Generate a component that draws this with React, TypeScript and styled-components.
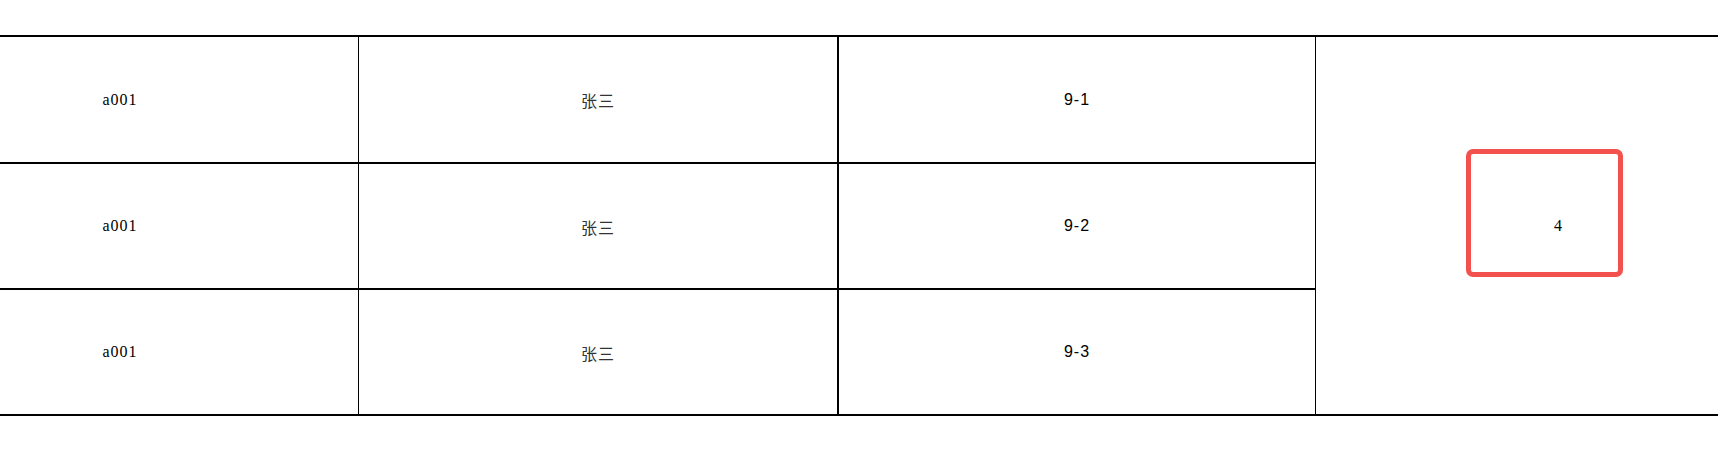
import React from "react";
import styled, { createGlobalStyle } from "styled-components";

const GlobalStyle = createGlobalStyle`
  html, body {
    margin: 0;
    padding: 0;
    background: #ffffff;
    overflow: hidden;
  }
  body {
    font-family: "Liberation Serif", "Noto Sans CJK SC", serif;
    color: #000;
  }
`;

const Page = styled.div`
  width: 1718px;
  height: 470px;
  padding-top: 35px;
  box-sizing: border-box;
  overflow: hidden;
`;

const Grid = styled.div`
  margin-left: -118px;
  width: 1918px;
  display: grid;
  grid-template-columns: 477px 480px 477px 484px;
  grid-template-rows: 127px 126px 126px;
  border-top: 2px solid #000;
`;

type Kind = "serif" | "cjk" | "sans";

const Cell = styled.div<{ $divider: number; $kind: Kind }>`
  box-sizing: border-box;
  display: flex;
  align-items: center;
  justify-content: center;
  border-bottom: 2px solid #000;
  border-right: ${(p) => p.$divider}px solid #000;
  font-size: 16px;
  letter-spacing: 1px;
  padding-top: ${(p) => (p.$kind === "cjk" ? 1 : 0)}px;
  font-family: ${(p) =>
    p.$kind === "serif"
      ? `"Liberation Serif", serif`
      : p.$kind === "cjk"
      ? `"Noto Sans CJK SC", sans-serif`
      : `"Liberation Sans", sans-serif`};
  color: ${(p) => (p.$kind === "cjk" ? "#333" : "#000")};
`;

const TotalCell = styled.div`
  box-sizing: border-box;
  grid-column: 4;
  grid-row: 1 / span 3;
  position: relative;
  display: flex;
  align-items: center;
  justify-content: center;
  border-bottom: 2px solid #000;
  font-family: "Liberation Serif", serif;
  font-size: 16px;
  padding-left: 0px;
`;

const Highlight = styled.div`
  position: absolute;
  left: 150px;
  top: 112px;
  width: 157px;
  height: 128px;
  box-sizing: border-box;
  border: 5px solid #f3514d;
  border-radius: 7px;
  pointer-events: none;
`;

const rows = [
  { id: "a001", name: "张三", code: "9-1" },
  { id: "a001", name: "张三", code: "9-2" },
  { id: "a001", name: "张三", code: "9-3" },
];

export default function App() {
  return (
    <>
      <GlobalStyle />
      <Page>
        <Grid>
          {rows.map((r, i) => (
            <React.Fragment key={i}>
              <Cell $divider={1} $kind="serif" style={{ gridRow: i + 1, gridColumn: 1 }}>
                {r.id}
              </Cell>
              <Cell $divider={2} $kind="cjk" style={{ gridRow: i + 1, gridColumn: 2 }}>
                {r.name}
              </Cell>
              <Cell $divider={1} $kind="sans" style={{ gridRow: i + 1, gridColumn: 3 }}>
                {r.code}
              </Cell>
            </React.Fragment>
          ))}
          <TotalCell>
            4
            <Highlight />
          </TotalCell>
        </Grid>
      </Page>
    </>
  );
}
